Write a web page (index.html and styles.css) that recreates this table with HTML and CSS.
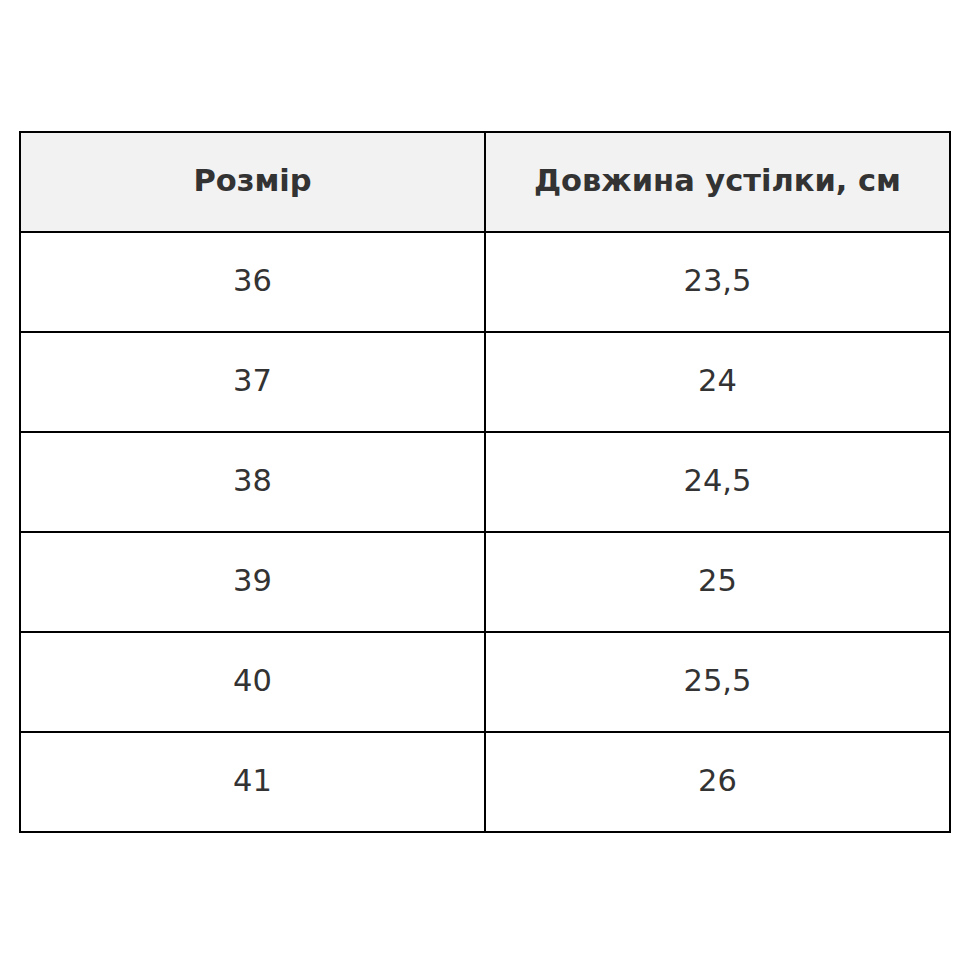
FILE: index.html
```html
<!DOCTYPE html>
<html lang="uk">
<head>
<meta charset="utf-8">
<link rel="stylesheet" href="styles.css">
</head>
<body>
<div class="page">
  <table class="sizes">
    <thead>
      <tr><th>Розмір</th><th>Довжина устілки, см</th></tr>
    </thead>
    <tbody>
      <tr><td>36</td><td>23,5</td></tr>
      <tr><td>37</td><td>24</td></tr>
      <tr><td>38</td><td>24,5</td></tr>
      <tr><td>39</td><td>25</td></tr>
      <tr><td>40</td><td>25,5</td></tr>
      <tr><td>41</td><td>26</td></tr>
    </tbody>
  </table>
</div>
</body>
</html>
```
FILE: styles.css
```css
html, body {
  margin: 0;
  padding: 0;
  background: #fff;
}
.page {
  padding: 131px 0 0 19px;
}
.sizes {
  border-collapse: collapse;
  width: 932px;
  table-layout: fixed;
  font-family: "DejaVu Sans", sans-serif;
  color: #333;
}
.sizes th,
.sizes td {
  border: 2px solid #000;
  padding: 0 0 2px 0;
  text-align: center;
  vertical-align: middle;
  font-size: 30.5px;
  line-height: 1.2;
  box-sizing: border-box;
  height: 100px;
}
.sizes th {
  background: #f2f2f2;
  font-weight: bold;
}
```
